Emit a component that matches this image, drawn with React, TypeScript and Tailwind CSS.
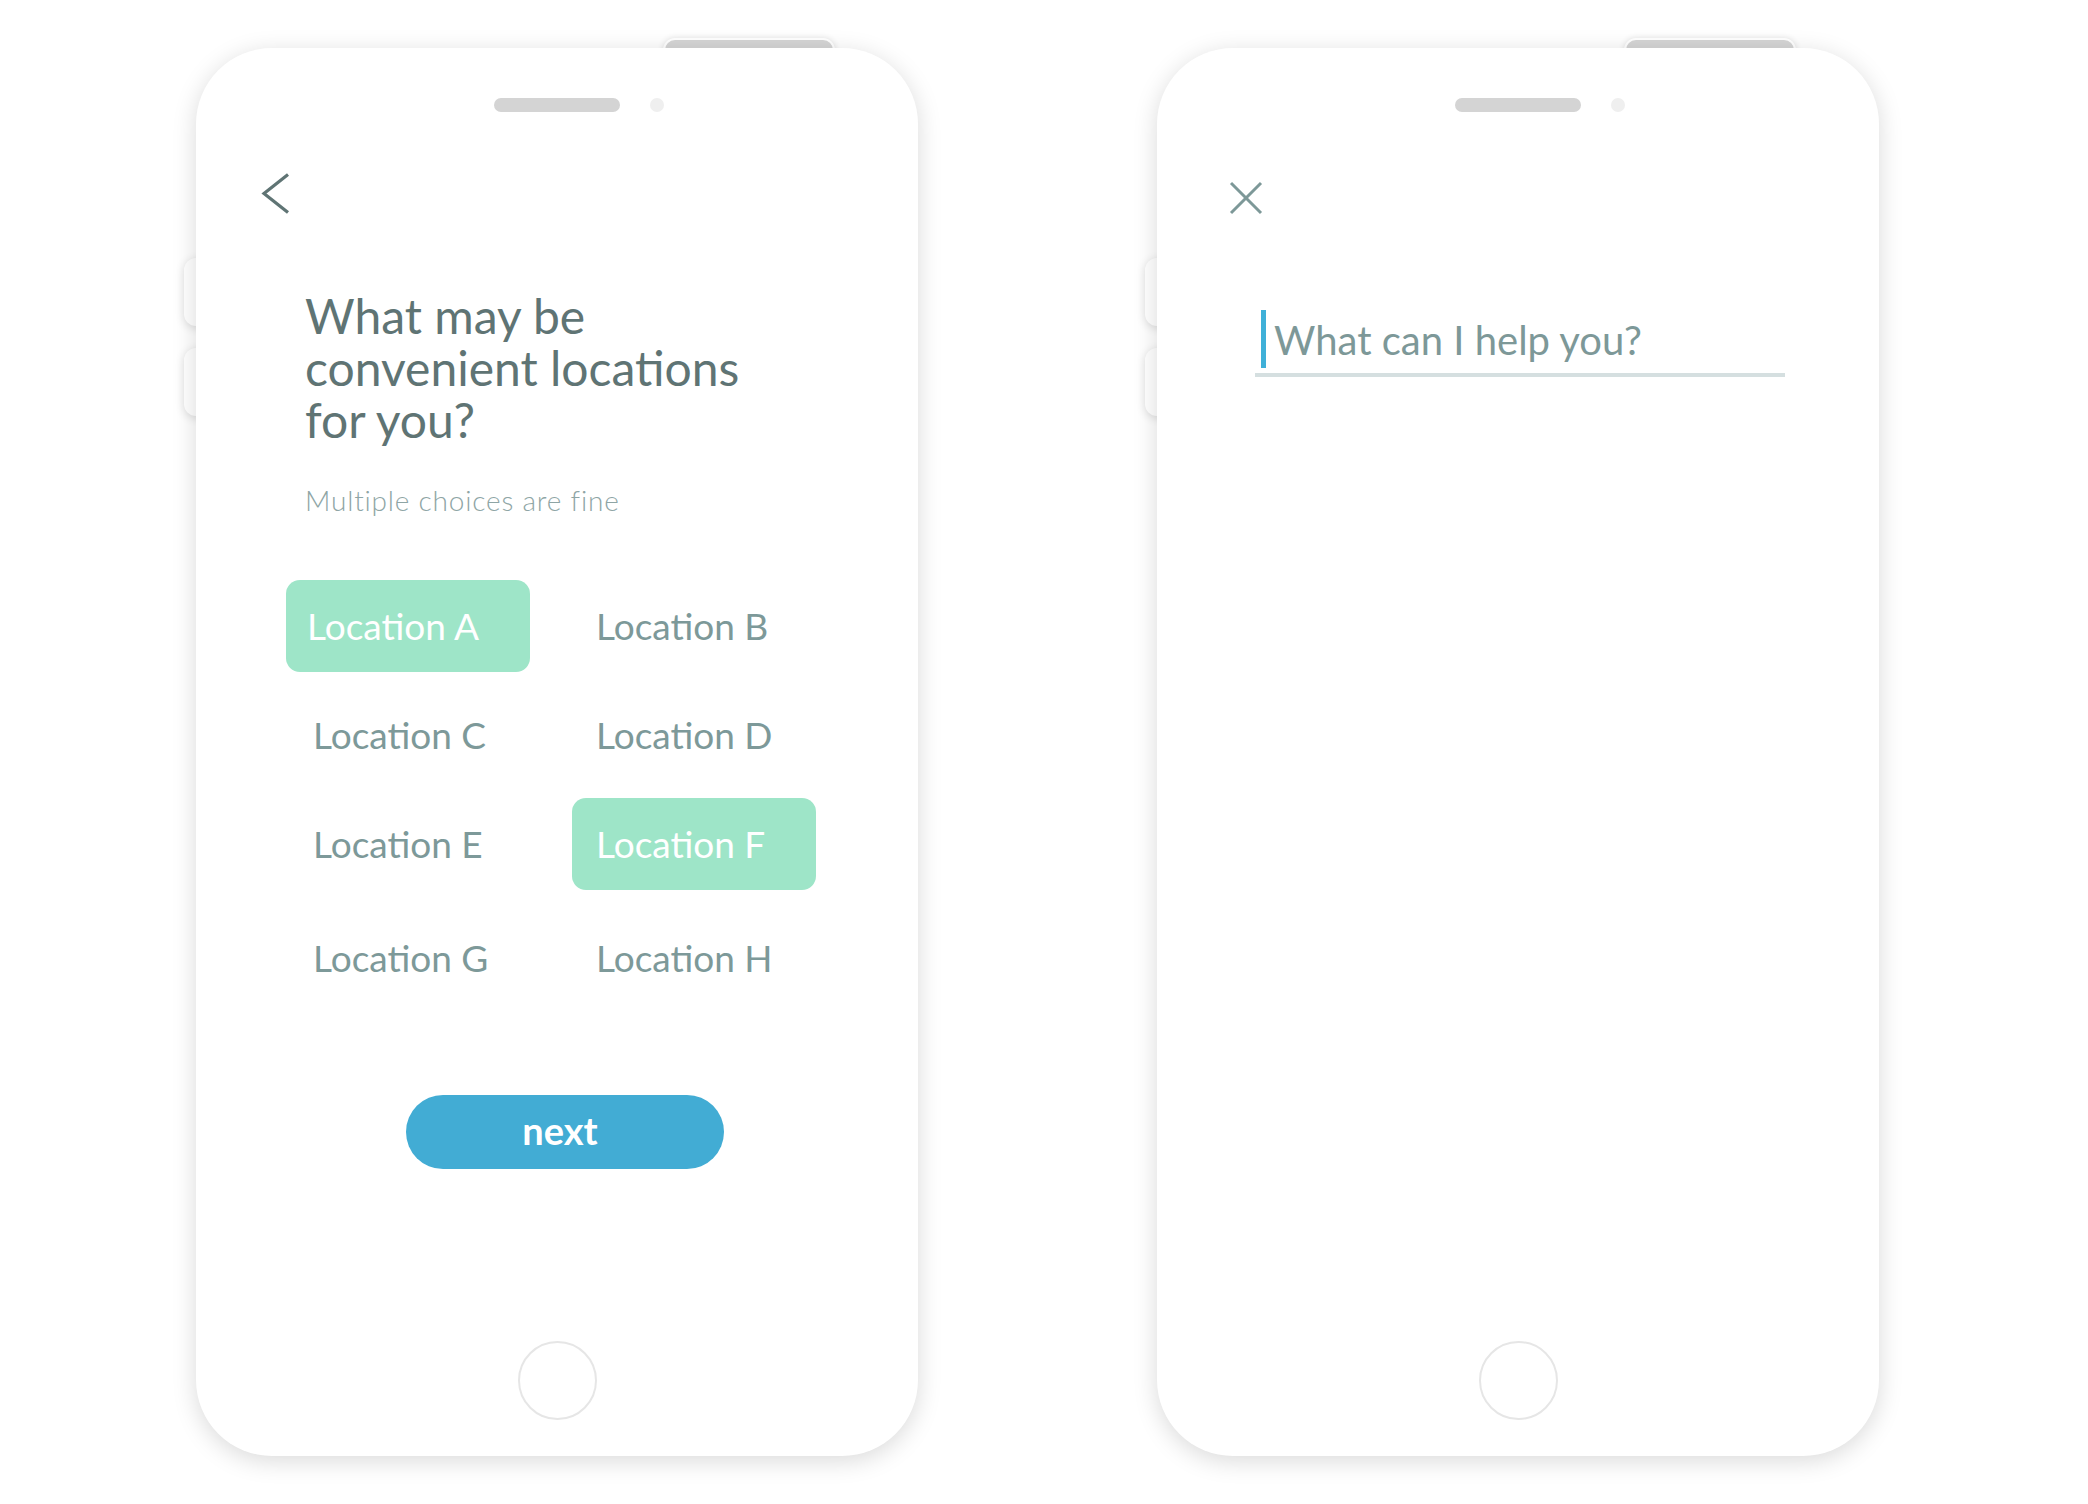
const font = "font-['Lato','Open_Sans',sans-serif]";

const locations = [
  { label: "Location A", selected: true },
  { label: "Location B", selected: false },
  { label: "Location C", selected: false },
  { label: "Location D", selected: false },
  { label: "Location E", selected: false },
  { label: "Location F", selected: true },
  { label: "Location G", selected: false },
  { label: "Location H", selected: false },
];

function PhoneFrame({ children }: { children: React.ReactNode }) {
  return (
    <div className="relative w-[722px] h-[1408px] shrink-0">
      {/* hardware buttons sit behind the body */}
      <div className="absolute left-[467px] top-[-10px] w-[172px] h-[30px] rounded-t-[12px] bg-[#d5d5d5] border-2 border-white shadow-[0_0_6px_rgba(0,0,0,0.12)]" />
      <div className="absolute left-[-12px] top-[210px] w-[30px] h-[68px] rounded-[12px] bg-white shadow-[0_2px_10px_rgba(0,0,0,0.14)]" />
      <div className="absolute left-[-12px] top-[300px] w-[30px] h-[68px] rounded-[12px] bg-white shadow-[0_2px_10px_rgba(0,0,0,0.14)]" />
      <div className="relative w-full h-full rounded-[76px] bg-white shadow-[0_5px_24px_rgba(0,0,0,0.15)] flex flex-col pt-[50px]">
        <div className="flex items-center gap-[30px] ml-[298px]">
          <div className="w-[126px] h-[14px] rounded-full bg-[#d4d4d4]" />
          <div className="w-[14px] h-[14px] rounded-full bg-[#efefef]" />
        </div>
        {children}
        <div className="mt-auto mb-[36px] mx-auto w-[79px] h-[79px] rounded-full border-2 border-[#e6e6e6]" />
      </div>
    </div>
  );
}

function QuestionScreen() {
  return (
    <PhoneFrame>
      <svg className="mt-[61px] ml-[65px]" width="29" height="41" viewBox="0 0 29 41" fill="none">
        <polyline points="27,1.5 3,20.5 27,39.5" stroke="#5f7474" strokeWidth="3.2" />
      </svg>
      <h1 className="mt-[76px] ml-[109px] text-[48px] leading-[52px] text-[#5f7474] font-normal">
        What may be
        <br />
        convenient locations
        <br />
        for you?
      </h1>
      <p className="mt-[38px] ml-[109px] text-[28px] leading-[32px] tracking-[0.8px] font-light text-[#8ea5a5]">
        Multiple choices are fine
      </p>
      <div className="mt-[64px] ml-[90px] grid grid-cols-[244px_244px] gap-x-[42px] gap-y-[17px]">
        {locations.map((loc, i) => {
          const pad = i === 0 ? "pl-[21px]" : i % 2 === 0 ? "pl-[27px]" : "pl-[24px]";
          return (
            <div
              key={loc.label}
              className={
                pad +
                (i >= 6 ? " mt-[5px]" : "") +
                " h-[92px] flex items-center text-[37px] " +
                (loc.selected ? "rounded-[14px] bg-[#9ee5c8] text-white" : "text-[#7d9999]")
              }
            >
              {loc.label}
            </div>
          );
        })}
      </div>
      <button className="mt-[91px] ml-[210px] w-[318px] h-[74px] pr-[10px] pb-[4px] rounded-full bg-[#42acd4] text-white text-[38px] font-bold leading-none">
        next
      </button>
    </PhoneFrame>
  );
}

function SearchScreen() {
  return (
    <PhoneFrame>
      <svg className="mt-[69px] ml-[72px]" width="34" height="34" viewBox="0 0 34 34" fill="none">
        <line x1="2" y1="2" x2="32" y2="32" stroke="#7d9898" strokeWidth="3" />
        <line x1="32" y1="2" x2="2" y2="32" stroke="#7d9898" strokeWidth="3" />
      </svg>
      <div className="mt-[95px] ml-[104px] h-[58px] flex items-center gap-[8px]">
        <div className="w-[5px] h-[58px] bg-[#3fb0d8]" />
        <span className="text-[40px] leading-none text-[#7d9898] pt-[2px]">What can I help you?</span>
      </div>
      <div className="mt-[5px] ml-[98px] w-[530px] h-[4px] bg-[#d5dfe0]" />
    </PhoneFrame>
  );
}

export default function App() {
  return (
    <div className={`${font} w-[2088px] h-[1504px] bg-white overflow-hidden`}>
      <div className="flex gap-[239px] pl-[196px] pt-[48px]">
        <QuestionScreen />
        <SearchScreen />
      </div>
    </div>
  );
}
